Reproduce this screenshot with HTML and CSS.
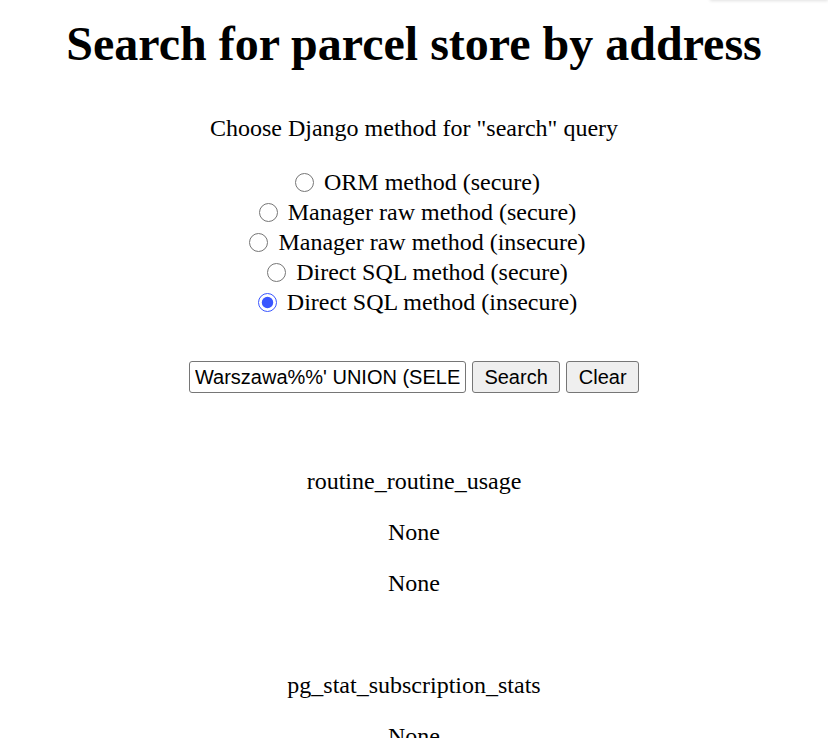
FILE: index.html
```html
<!DOCTYPE html>
<html lang="en">
<head>
<meta charset="utf-8">
<title>Search for parcel store by address</title>
<link rel="stylesheet" href="styles.css">
</head>
<body>
<div class="edge-shadow"></div>
<main class="page">
  <h1 class="title">Search for parcel store by address</h1>
  <form class="search-form">
    <p class="prompt">Choose Django method for "search" query</p>
    <div class="options">
      <label class="option"><input type="radio" name="method" value="orm"> ORM method (secure)</label>
      <label class="option"><input type="radio" name="method" value="raw_secure"> Manager raw method (secure)</label>
      <label class="option"><input type="radio" name="method" value="raw_insecure"> Manager raw method (insecure)</label>
      <label class="option"><input type="radio" name="method" value="sql_secure"> Direct SQL method (secure)</label>
      <label class="option"><input type="radio" name="method" value="sql_insecure" checked> Direct SQL method (insecure)</label>
    </div>
    <div class="controls">
      <input class="query" type="text" name="q" value="Warszawa%%' UNION (SELECT table_name, NULL, NULL FROM information_schema.tables)--">
      <button class="btn" type="button">Search</button>
      <button class="btn" type="button">Clear</button>
    </div>
  </form>
  <section class="results">
    <div class="result">
      <p>routine_routine_usage</p>
      <p>None</p>
      <p>None</p>
    </div>
    <div class="result">
      <p>pg_stat_subscription_stats</p>
      <p>None</p>
      <p>None</p>
    </div>
  </section>
</main>
</body>
</html>
```

FILE: styles.css
```css
html, body {
  margin: 0;
  padding: 0;
  background: #ffffff;
}

body {
  font-family: "Liberation Serif", "Times New Roman", serif;
  font-size: 24px;
  line-height: 27px;
  color: #000000;
  overflow: hidden;
}

.edge-shadow {
  position: absolute;
  top: -40px;
  right: 0;
  width: 118px;
  height: 40px;
  background: #ffffff;
  box-shadow: 0 1px 3px rgba(0, 0, 0, 0.12);
}

.page {
  display: flex;
  flex-direction: column;
  align-items: center;
  padding: 0 12px;
  text-align: center;
}

.title {
  margin: 17px 0 0;
  font-size: 48px;
  line-height: 53px;
  font-weight: bold;
}

.search-form {
  display: flex;
  flex-direction: column;
  align-items: center;
}

.prompt {
  margin: 45px 0 0;
}

.options {
  display: flex;
  flex-direction: column;
  align-items: center;
  margin-top: 25px;
}

.option {
  display: flex;
  align-items: center;
  height: 30px;
  gap: 6px;
}

.option input {
  width: 19px;
  height: 19px;
  margin: 0 4px 0 7px;
  accent-color: #3a56ff;
}

.controls {
  display: flex;
  align-items: center;
  gap: 6px;
  margin-top: 44px;
}

.query {
  box-sizing: border-box;
  width: 277px;
  height: 32px;
  padding: 0 5px;
  font-family: "Liberation Sans", Arial, sans-serif;
  font-size: 20px;
  color: #000000;
  border: 1px solid #767676;
  border-radius: 3px;
  background: #ffffff;
}

.btn {
  box-sizing: border-box;
  height: 32px;
  padding: 0 11.5px;
  font-family: "Liberation Sans", Arial, sans-serif;
  font-size: 20px;
  color: #000000;
  background: #efefef;
  border: 1px solid #767676;
  border-radius: 3px;
}

.results {
  display: flex;
  flex-direction: column;
  align-items: center;
  gap: 75px;
  margin-top: 75px;
}

.result {
  display: flex;
  flex-direction: column;
  align-items: center;
  gap: 24px;
}

.result p {
  margin: 0;
}
```
